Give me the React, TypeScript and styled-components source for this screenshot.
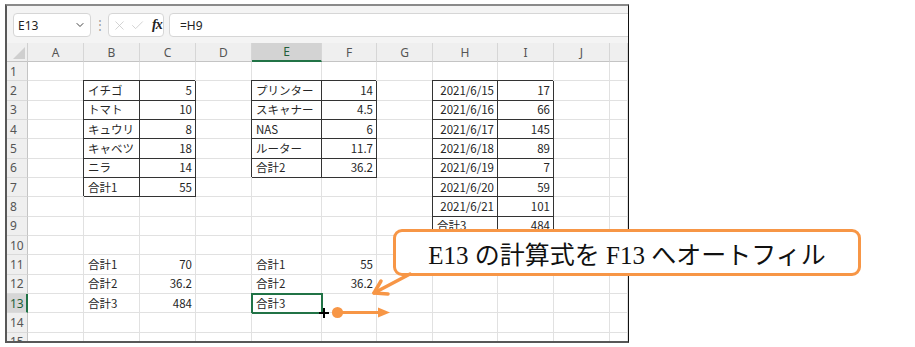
import React from 'react'
import styled, {createGlobalStyle} from 'styled-components'
import {X, Check, ChevronDown} from 'lucide-react'

type Align = 'left' | 'right'

type CellSpec = {
    v?: string
    align?: Align
    boxed?: boolean
    selected?: boolean
}

const ORANGE = '#f79646'
const GREEN = '#217346'

const GlobalStyle = createGlobalStyle`
  html, body {
    margin: 0;
    padding: 0;
    background: #ffffff;
  }
  body {
    width: 915px;
    height: 347px;
    overflow: hidden;
  }
`

const Page = styled.div`
  position: relative;
  width: 915px;
  height: 347px;
  box-sizing: border-box;
  padding: 4px 0 0 5px;
  background: #ffffff;
`

const Window = styled.div`
  width: 624px;
  height: 339px;
  box-sizing: border-box;
  border: 2px solid #585858;
  border-top-color: #8a8a8a;
  border-right: 1px solid #111111;
  overflow: hidden;
  display: flex;
  flex-direction: column;
  background: #ffffff;
  font-family: "Noto Sans", "Liberation Sans", sans-serif;
`

const Toolbar = styled.div`
  display: flex;
  align-items: center;
  height: 37px;
  box-sizing: border-box;
  padding: 7px 0 6px 6px;
  background: #f4f4f4;
  flex-shrink: 0;
`

const NameBox = styled.div`
  display: flex;
  align-items: center;
  justify-content: space-between;
  width: 78px;
  height: 24px;
  box-sizing: border-box;
  padding: 0 4px 0 4px;
  background: #ffffff;
  border: 1px solid #d6d6d6;
  border-radius: 4px;
  font-size: 12px;
  color: #222;
`

const Separator = styled.div`
  width: 17px;
  text-align: center;
  color: #9a9a9a;
  font-size: 12px;
  line-height: 1;
`

const FuncBox = styled.div`
  display: flex;
  align-items: center;
  gap: 3px;
  width: 56px;
  height: 24px;
  box-sizing: border-box;
  padding-left: 3px;
  background: #ffffff;
  border: 1px solid #d6d6d6;
  border-radius: 4px;
  color: #c4c4c4;
`

const Fx = styled.span`
  margin-left: 4px;
  font-family: "Liberation Serif", serif;
  font-style: italic;
  font-weight: bold;
  font-size: 14px;
  color: #222;
  letter-spacing: -1px;
`

const FormulaBox = styled.div`
  flex: 1;
  display: flex;
  align-items: center;
  height: 24px;
  box-sizing: border-box;
  margin-left: 5px;
  margin-right: -6px;
  padding-left: 10px;
  background: #ffffff;
  border: 1px solid #d6d6d6;
  border-radius: 4px;
  font-size: 12px;
  color: #222;
`

const Sheet = styled.div`
  display: grid;
  grid-template-columns: 21px 56px 56px 56px 56px 70px 55px 56px 65px 56px 56px 1fr;
  grid-template-rows: 19px;
  grid-auto-rows: 19.33px;
  background: #ffffff;
  font-family: "Noto Sans CJK JP", "Noto Sans", sans-serif;
  font-size: 11.5px;
  color: #262626;
`

const Corner = styled.div`
  display: flex;
  align-items: flex-end;
  justify-content: flex-end;
  padding: 0 2px 2px 0;
  box-sizing: border-box;
  background: #efefef;
  border-right: 1px solid #d0d0d0;
  border-bottom: 1px solid #c4c4c4;
`

const CornerMark = styled.div`
  width: 0;
  height: 0;
  border-left: 12px solid transparent;
  border-bottom: 12px solid #cfcfcf;
`

const ColHead = styled.div<{ $active?: boolean }>`
  display: flex;
  align-items: center;
  justify-content: center;
  box-sizing: border-box;
  font-family: "Noto Sans", "Liberation Sans", sans-serif;
  font-size: 12px;
  color: ${({$active}) => $active ? '#1f5f3a' : '#555'};
  background: ${({$active}) => $active ? '#d3d3d3' : '#efefef'};
  border-right: 1px solid #d6d6d6;
  border-bottom: ${({$active}) => $active ? `2px solid ${GREEN}` : '1px solid #c4c4c4'};
`

const RowHead = styled.div<{ $active?: boolean }>`
  display: flex;
  align-items: center;
  box-sizing: border-box;
  padding-left: 3px;
  font-family: "Noto Sans", "Liberation Sans", sans-serif;
  font-size: 12px;
  color: ${({$active}) => $active ? '#1f5f3a' : '#555'};
  background: ${({$active}) => $active ? '#d6d6d6' : '#efefef'};
  border-bottom: 1px solid #dadada;
  border-right: ${({$active}) => $active ? `2px solid ${GREEN}` : '1px solid #c4c4c4'};
`

const Cell = styled.div<{ $align?: Align; $boxed?: boolean; $selected?: boolean }>`
  display: flex;
  align-items: center;
  justify-content: ${({$align}) => $align === 'right' ? 'flex-end' : 'flex-start'};
  box-sizing: border-box;
  padding: 0 3px 1px 4px;
  white-space: nowrap;
  overflow: visible;
  border-right: 1px solid ${({$boxed}) => $boxed ? '#333' : '#e1e1e1'};
  border-bottom: 1px solid ${({$boxed}) => $boxed ? '#333' : '#e1e1e1'};
  box-shadow: ${({$boxed}) => $boxed ? '-1px -1px 0 0 #333' : 'none'};
  outline: ${({$selected}) => $selected ? `2px solid ${GREEN}` : 'none'};
  outline-offset: -1px;
`

const Callout = styled.div`
  position: absolute;
  left: 393px;
  top: 229px;
  width: 468px;
  height: 47px;
  box-sizing: border-box;
  display: flex;
  align-items: center;
  justify-content: center;
  background: #ffffff;
  border: 3px solid ${ORANGE};
  border-radius: 9px;
  font-family: "Liberation Serif", "Noto Sans CJK JP", serif;
  font-size: 25px;
  color: #111;
  white-space: nowrap;
`

const Overlay = styled.svg`
  position: absolute;
  left: 0;
  top: 0;
  pointer-events: none;
`

const columns = ['A', 'B', 'C', 'D', 'E', 'F', 'G', 'H', 'I', 'J', '']

const L = (v: string, boxed = false): CellSpec => ({v, align: 'left', boxed})
const R = (v: string, boxed = false): CellSpec => ({v, align: 'right', boxed})

const sheet: Record<number, Record<string, CellSpec>> = {
    2: {B: L('イチゴ', true), C: R('5', true), E: L('プリンター', true), F: R('14', true), H: R('2021/6/15', true), I: R('17', true)},
    3: {B: L('トマト', true), C: R('10', true), E: L('スキャナー', true), F: R('4.5', true), H: R('2021/6/16', true), I: R('66', true)},
    4: {B: L('キュウリ', true), C: R('8', true), E: L('NAS', true), F: R('6', true), H: R('2021/6/17', true), I: R('145', true)},
    5: {B: L('キャベツ', true), C: R('18', true), E: L('ルーター', true), F: R('11.7', true), H: R('2021/6/18', true), I: R('89', true)},
    6: {B: L('ニラ', true), C: R('14', true), E: L('合計2', true), F: R('36.2', true), H: R('2021/6/19', true), I: R('7', true)},
    7: {B: L('合計1', true), C: R('55', true), H: R('2021/6/20', true), I: R('59', true)},
    8: {H: R('2021/6/21', true), I: R('101', true)},
    9: {H: L('合計3', true), I: R('484', true)},
    11: {B: L('合計1'), C: R('70'), E: L('合計1'), F: R('55')},
    12: {B: L('合計2'), C: R('36.2'), E: L('合計2'), F: R('36.2')},
    13: {B: L('合計3'), C: R('484'), E: {v: '合計3', align: 'left', selected: true}},
}

const rowNumbers = Array.from({length: 15}, (_, i) => i + 1)

const FormulaBar = () => (
    <Toolbar>
        <NameBox>
            <span>E13</span>
            <ChevronDown size={12} color="#444" strokeWidth={2}/>
        </NameBox>
        <Separator>⋮</Separator>
        <FuncBox>
            <X size={15} strokeWidth={1.2}/>
            <Check size={15} strokeWidth={1.2}/>
            <Fx>fx</Fx>
        </FuncBox>
        <FormulaBox>=H9</FormulaBox>
    </Toolbar>
)

const Grid = () => (
    <Sheet>
        <Corner><CornerMark/></Corner>
        {columns.map((c, i) => (
            <ColHead key={'h' + i} $active={c === 'E'}>{c}</ColHead>
        ))}
        {rowNumbers.map(r => (
            <React.Fragment key={r}>
                <RowHead $active={r === 13}>{r}</RowHead>
                {columns.map((c, i) => {
                    const spec = (sheet[r] && sheet[r][c]) || {}
                    return (
                        <Cell key={r + '-' + i} $align={spec.align} $boxed={spec.boxed} $selected={spec.selected}>
                            {spec.v}
                        </Cell>
                    )
                })}
            </React.Fragment>
        ))}
    </Sheet>
)

const Arrows = () => (
    <Overlay width={915} height={347} viewBox="0 0 915 347">
        <g stroke={ORANGE} strokeWidth={3.5} strokeLinecap="round" strokeLinejoin="round" fill="none">
            <line x1={410} y1={274} x2={374} y2={293}/>
            <polyline points="388,294 374,293 381,281"/>
        </g>
        <circle cx={337.5} cy={312.5} r={5.6} fill={ORANGE}/>
        <line x1={337} y1={312.5} x2={380} y2={312.5} stroke={ORANGE} strokeWidth={3}/>
        <polygon points="378,307.5 390,312.5 378,317.5" fill={ORANGE}/>
        <g stroke="#000" strokeWidth={2}>
            <line x1={319} y1={313} x2={329} y2={313}/>
            <line x1={324} y1={308} x2={324} y2={318}/>
        </g>
    </Overlay>
)

const App = () => {
    return (
        <React.Fragment>
            <GlobalStyle/>
            <Page>
                <Window>
                    <FormulaBar/>
                    <Grid/>
                </Window>
                <Callout>E13 の計算式を F13 へオートフィル</Callout>
                <Arrows/>
            </Page>
        </React.Fragment>
    )
}

export default App
